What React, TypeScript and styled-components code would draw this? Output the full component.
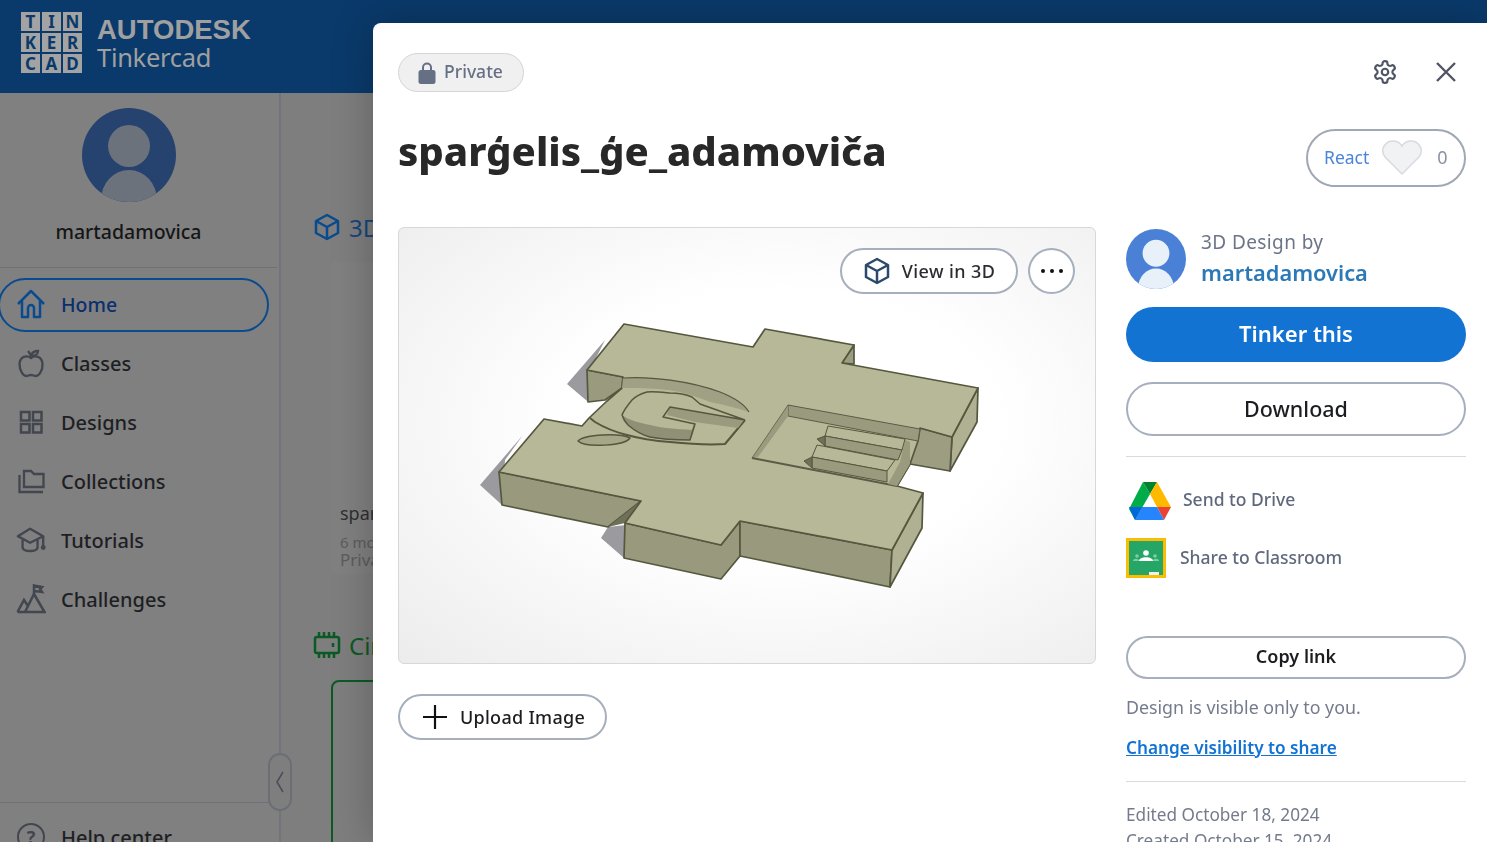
import React from "react";
import styled, { createGlobalStyle } from "styled-components";

const GlobalStyle = createGlobalStyle`
  html, body { margin: 0; padding: 0; height: 100%; overflow: hidden; }
  body { font-family: "Noto Sans", "Open Sans", sans-serif; background: #7e7e7e; }
  * { box-sizing: border-box; }
`;

const NAV_ICON_STROKE = "#42464f";

const HomeIcon = () => (
  <svg width="30" height="30" viewBox="0 0 30 30" fill="none" stroke="#0a4a8e" strokeWidth="2.500" strokeLinejoin="round">
    <path d="M2 15 L15 2 L28 15" />
    <path d="M6 12 V28 H12 V19 a3 3 0 0 1 6 0 V28 H24 V12" />
  </svg>
);

const AppleIcon = () => (
  <svg width="30" height="30" viewBox="0 0 30 30" fill="none" stroke={NAV_ICON_STROKE} strokeWidth="2.300">
    <path d="M15 10 C11 7 4 8 3.500 16 C3.500 22 7 28 10 28 C12 28 13 27 15 27 C17 27 18 28 20 28 C23 28 27 22 26.500 16 C26 8 19 7 15 10 Z" />
    <path d="M15 10 C15 7 14 5 12 3 M15 8 C16 4 19 3 22 3 C22 6 19 8 15 8 Z" />
  </svg>
);

const GridIcon = () => (
  <svg width="30" height="30" viewBox="0 0 30 30" fill="none" stroke={NAV_ICON_STROKE} strokeWidth="2.500">
    <rect x="5" y="5" width="8.500" height="8.500" />
    <rect x="17" y="5" width="8.500" height="8.500" />
    <rect x="5" y="17" width="8.500" height="8.500" />
    <rect x="17" y="17" width="8.500" height="8.500" />
  </svg>
);

const FolderIcon = () => (
  <svg width="30" height="30" viewBox="0 0 30 30" fill="none" stroke={NAV_ICON_STROKE} strokeWidth="2.300">
    <path d="M8 21 V5 H15 L18 8 H27.500 V21 Z" />
    <path d="M3.500 9 V26 H27" />
  </svg>
);

const CapIcon = () => (
  <svg width="32" height="30" viewBox="0 0 32 30" fill="none" stroke={NAV_ICON_STROKE} strokeWidth="2.500" strokeLinejoin="round">
    <path d="M2 11 L15 3 L29 11 L15 18 Z" />
    <path d="M7 15 V23 C8 28 22 28 23 23 V15" />
    <path d="M29 11 V21" />
    <circle cx="29" cy="23" r="1.400" fill={NAV_ICON_STROKE} />
  </svg>
);

const MountainIcon = () => (
  <svg width="30" height="30" viewBox="0 0 30 30" fill="none" stroke={NAV_ICON_STROKE} strokeWidth="2.500">
    <path d="M1.500 28 H28.500 L18 10 L9 28 M12 22 L8 16 L1.500 28" />
    <path d="M18 10 V1.500 L26 3 L24 5 L26 8 L18 7" />
  </svg>
);

const CubeIcon = ({ size, color, width = 2.500 }: { size: number; color: string; width?: number }) => (
  <svg width={size} height={size} viewBox="0 0 28 28" fill="none" stroke={color} strokeWidth={width} strokeLinejoin="round">
    <path d="M14 2 L25 8 V20 L14 26 L3 20 V8 Z" />
    <path d="M3 8 L14 14 L25 8 M14 14 V26" />
  </svg>
);

const ChipIcon = () => (
  <svg width="28" height="28" viewBox="0 0 28 28" fill="none" stroke="#0b5a26" strokeWidth="2.500">
    <rect x="2" y="6" width="24" height="16" rx="2" />
    <path d="M6 1 V6 M11 1 V6 M16 1 V6 M21 1 V6 M6 22 V27 M11 22 V27 M16 22 V27 M21 22 V27 M20 12 V16" />
  </svg>
);

const PersonAvatar = ({ size, bg, fg }: { size: number; bg: string; fg: string }) => (
  <svg width={size} height={size} viewBox="0 0 94 94">
    <clipPath id={`clip-${size}`}>
      <circle cx="47" cy="47" r="47" />
    </clipPath>
    <g clipPath={`url(#clip-${size})`}>
      <rect width="94" height="94" fill={bg} />
      <circle cx="47" cy="38" r="21" fill={fg} />
      <ellipse cx="47" cy="92" rx="28" ry="30" fill={fg} />
    </g>
  </svg>
);

const DriveIcon = () => (
  <svg width="44" height="40" viewBox="0 0 44 40">
    <path d="M15 1 L22 13 L7 39 L1 28 Z" fill="#00ac47" />
    <path d="M15 1 H29 L22 13 Z" fill="#00832d" />
    <path d="M29 1 L43 26 H29 L22 13 Z" fill="#ffba00" />
    <path d="M43 26 L36 39 L29 26 Z" fill="#ea4335" />
    <path d="M14 26 H29 L36 39 H7 Z" fill="#2684fc" />
    <path d="M1 26 H14 L7 39 Z" fill="#0066da" />
  </svg>
);

const ClassroomIcon = () => (
  <svg width="40" height="40" viewBox="0 0 40 40">
    <rect width="40" height="40" fill="#fbbc04" />
    <rect x="3" y="3" width="34" height="34" fill="#25a667" />
    <circle cx="20" cy="15" r="2.800" fill="#fff" />
    <path d="M13 23 C13 18 27 18 27 23 Z" fill="#fff" />
    <circle cx="11" cy="18" r="1.800" fill="#7fcfa5" />
    <circle cx="29" cy="18" r="1.800" fill="#7fcfa5" />
    <path d="M7 23 C7 20 13 20 13 23 Z M27 23 C27 20 33 20 33 23 Z" fill="#7fcfa5" />
    <rect x="23" y="34" width="10" height="3" fill="#f1f1f1" />
  </svg>
);

const ModelDrawing = () => (
  <ModelSvg viewBox="398 227 698 437">
    <g fill="#9b9b9f">
      <path d="M605 340 L567 384 L587 401 L590 370 Z" />
      <path d="M523 435 L480 485 L502 505 L505 460 Z" />
      <path d="M608 527 L601 538 L624 558 L626 525 Z" />
      <path d="M590 418 L607 401 L612 403 L598 418 Z" />
    </g>
    <g stroke="#55573f" strokeWidth="1.700" strokeLinejoin="round">
      <path d="M587 370 L623 377 L622 388 L605 400 L588 402 Z" fill="#9a9b7e" />
      <path d="M499 472 L641 501 L608 527 L502 505 Z" fill="#999a7d" />
      <path d="M641 501 L625 523 L608 527 Z" fill="#6f7058" stroke="none" />
      <path d="M625 523 L721 545 L740 521 L740 556 L721 579 L624 558 Z" fill="#999a7d" />
      <path d="M740 521 L892 550 L890 587 L740 556 Z" fill="#999a7d" />
      <path d="M923 493 L892 550 L890 587 L922 528 Z" fill="#b0b193" />
      <path d="M952 437 L978 388 L977 422 L950 471 Z" fill="#b0b193" />
      <path d="M920 428 L952 437 L950 471 L910 464 L897 486 L880 480 L905 440 Z" fill="#9d9e81" />
      <path d="M842 363 L854 345 V364 Z" fill="#9d9e81" />
      <path
        d="M624 324 L753 347 L765 329 L854 345 L842 363 L978 388 L952 437 L920 428 L918 441 L910 464 L897 486 L923 493 L892 550 L740 521 L721 545 L625 523 L641 501 L499 472 L544 419 L582 426 L589 418 L607 401 L622 388 L623 377 L587 370 Z"
        fill="#b7b897"
      />
    </g>
    <g fill="#9a9b7e" stroke="#5a5c48" strokeWidth="1">
      <path d="M788 405 L920 429 L918 441 L788 416 Z" />
      <path d="M788 405 L788 416 L758 457 L752 458 Z" stroke="none" />
      <path d="M752 458 L897 486" fill="none" strokeWidth="2" />
      <path d="M788 405 L752 458" fill="none" strokeWidth="0.800" />
      <path d="M905 440 L910 442 L910 464 L897 486 L888 484 L900 462 Z" stroke="none" />
    </g>
    <g stroke="#55573f" strokeWidth="1">
      <path d="M828 426 L905 439 L902 450 L825 436 Z" fill="#b7b897" />
      <path d="M825 436 L902 450 L898 460 L825 446 Z" fill="#9a9b7e" />
      <path d="M825 436 L817 439 L825 446 Z" fill="#6f7058" />
      <path d="M817 445 L895 460 L887 471 L812 457 Z" fill="#b7b897" />
      <path d="M812 457 L887 471 L887 482 L812 468 Z" fill="#9a9b7e" />
      <path d="M812 457 L804 461 L812 468 Z" fill="#6f7058" />
    </g>
    <g strokeLinejoin="round">
      <path d="M623 378 C650 376 690 381 720 392 C735 398 745 405 749 412 C738 408 725 405 710 402 C695 396 680 391 667 390 C650 388 635 388 622 388 Z" fill="#9fa084" />
      <path d="M623 378 C650 376 690 381 720 392 C735 398 745 405 749 412" fill="none" stroke="#55573f" strokeWidth="1.200" />
      <path
        d="M590 418 L595 422 C605 428 615 432 627 435 C645 440 655 441 670 442 C690 444 710 445 725 444 L745 420"
        fill="none"
        stroke="#55573f"
        strokeWidth="2"
      />
      <path d="M622 415 C622 420 624 422 628 425 C635 431 642 435 650 437 C665 440 678 440 690 440 L692 430 C675 429 662 428 650 425 C640 423 628 420 622 415 Z" fill="#8f9075" />
      <path d="M670 407 L744 420 L738 428 L695 422 L667 415 Z" fill="#9a9b7e" />
      <path d="M692 430 L695 422 L695 424 L690 440 Z" fill="#6f7058" />
      <path
        d="M745 420 L700 404 L692 397 C685 394 678 393 670 393 C660 392 652 391 647 392 C640 394 636 396 632 400 C627 406 624 410 622 415 C624 420 626 423 628 425 C635 431 642 435 650 437 C665 440 678 440 690 440 L695 424 L663 417 L670 407 L745 420"
        fill="none"
        stroke="#55573f"
        strokeWidth="1.500"
      />
      <path d="M578 441 C585 434 620 433 630 438 C625 446 585 448 578 441 Z" fill="#a6a788" stroke="#55573f" strokeWidth="1.500" />
    </g>
  </ModelSvg>
);

const navItems = [
  { label: "Classes", icon: <AppleIcon /> },
  { label: "Designs", icon: <GridIcon /> },
  { label: "Collections", icon: <FolderIcon /> },
  { label: "Tutorials", icon: <CapIcon /> },
  { label: "Challenges", icon: <MountainIcon /> },
];

const logoLetters = ["T", "I", "N", "K", "E", "R", "C", "A", "D"];

const App = () => (
  <>
    <GlobalStyle />
    <Page>
      <Header>
        <LogoGrid>
          {logoLetters.map((l, i) => (
            <LogoTile key={i}>{l}</LogoTile>
          ))}
        </LogoGrid>
        <Brand>
          <BrandTop>AUTODESK</BrandTop>
          <BrandBottom>Tinkercad</BrandBottom>
        </Brand>
      </Header>
      <Below>
        <Sidebar>
          <Profile>
            <PersonAvatar size={94} bg="#26426f" fg="#6b727c" />
            <ProfileName>martadamovica</ProfileName>
          </Profile>
          <Nav>
            <HomeItem>
              <HomeIcon />
              Home
            </HomeItem>
            {navItems.map((item) => (
              <NavItem key={item.label}>
                <NavIconBox>{item.icon}</NavIconBox>
                {item.label}
              </NavItem>
            ))}
          </Nav>
          <SidebarFoot>
            <HelpRow>
              <HelpCircle>?</HelpCircle>
              Help center
            </HelpRow>
            <CollapseHandle>
              <svg width="10" height="24" viewBox="0 0 10 24" fill="none" stroke="#4b4f59" strokeWidth="1.600">
                <path d="M8 2 L2 12 L8 22" />
              </svg>
            </CollapseHandle>
          </SidebarFoot>
        </Sidebar>
        <Main>
          <SectionHead>
            <CubeIcon size={28} color="#0a4a8e" />
            <SectionTitle>3D Designs</SectionTitle>
          </SectionHead>
          <DesignCard>
            <CardName>spargelis</CardName>
            <CardMeta>6 months ago</CardMeta>
            <CardPrivacy>Private</CardPrivacy>
          </DesignCard>
          <CircuitHead>
            <ChipIcon />
            <CircuitTitle>Circuits</CircuitTitle>
          </CircuitHead>
          <CircuitCard />
        </Main>
      </Below>
    </Page>

    <Modal>
      <TopBar>
        <PrivateTag>
          <svg width="18" height="23" viewBox="0 0 18 23" fill="#667085">
            <path d="M4 10 V6.500 a5 5 0 0 1 10 0 V10 H12 V6.500 a3 3 0 0 0 -6 0 V10 Z" />
            <rect x="0.500" y="9" width="17" height="14" rx="2.500" />
          </svg>
          Private
        </PrivateTag>
        <TopActions>
          <svg width="26" height="26" viewBox="0 0 24 24" fill="none" stroke="#4f5563" strokeWidth="2" strokeLinejoin="round">
            <path d="M12.220 2h-.440a2 2 0 0 0-2 2v.180a2 2 0 0 1-1 1.730l-.430.250a2 2 0 0 1-2 0l-.150-.080a2 2 0 0 0-2.730.730l-.220.380a2 2 0 0 0 .730 2.730l.150.100a2 2 0 0 1 1 1.720v.510a2 2 0 0 1-1 1.740l-.150.090a2 2 0 0 0-.730 2.730l.220.380a2 2 0 0 0 2.730.730l.150-.080a2 2 0 0 1 2 0l.430.250a2 2 0 0 1 1 1.730V20a2 2 0 0 0 2 2h.440a2 2 0 0 0 2-2v-.180a2 2 0 0 1 1-1.730l.430-.250a2 2 0 0 1 2 0l.150.080a2 2 0 0 0 2.730-.730l.220-.390a2 2 0 0 0-.730-2.730l-.150-.080a2 2 0 0 1-1-1.740v-.500a2 2 0 0 1 1-1.740l.150-.090a2 2 0 0 0 .730-2.730l-.220-.380a2 2 0 0 0-2.730-.730l-.150.080a2 2 0 0 1-2 0l-.430-.250a2 2 0 0 1-1-1.730V4a2 2 0 0 0-2-2z" />
            <circle cx="12" cy="12" r="3" />
          </svg>
          <svg width="24" height="24" viewBox="0 0 24 24" fill="none" stroke="#4f5563" strokeWidth="2.400">
            <path d="M3 3 L21 21 M21 3 L3 21" />
          </svg>
        </TopActions>
      </TopBar>

      <TitleRow>
        <Title>sparģelis_ģe_adamoviča</Title>
        <ReactPill>
          <ReactLabel>React</ReactLabel>
          <svg width="42" height="36" viewBox="0 0 42 36" fill="#f1f2f4" stroke="#d8dae0" strokeWidth="1.500">
            <path d="M21 34 L4 17 C-2 9 5 1 12 1 C16 1 19 3 21 6 C23 3 26 1 30 1 C37 1 44 9 38 17 Z" />
          </svg>
          <ReactCount>0</ReactCount>
        </ReactPill>
      </TitleRow>

      <Body>
        <div>
          <Viewer>
            <ModelDrawing />
            <ViewerActions>
              <ViewButton>
                <CubeIcon size={28} color="#2b4a6b" />
                View in 3D
              </ViewButton>
              <DotsButton>
                <Dot />
                <Dot />
                <Dot />
              </DotsButton>
            </ViewerActions>
          </Viewer>
          <UploadButton>
            <svg width="26" height="26" viewBox="0 0 26 26" stroke="#111" strokeWidth="2.200">
              <path d="M13 1 V25 M1 13 H25" />
            </svg>
            Upload Image
          </UploadButton>
        </div>

        <Side>
          <Author>
            <PersonAvatar size={60} bg="#4a80d6" fg="#e8f0fa" />
            <AuthorText>
              <AuthorCaption>3D Design by</AuthorCaption>
              <AuthorName>martadamovica</AuthorName>
            </AuthorText>
          </Author>
          <PrimaryButton>Tinker this</PrimaryButton>
          <OutlineButton>Download</OutlineButton>
          <Rule />
          <DriveRow>
            <DriveIcon />
            Send to Drive
          </DriveRow>
          <ClassroomRow>
            <ClassroomIcon />
            Share to Classroom
          </ClassroomRow>
          <CopyButton>Copy link</CopyButton>
          <VisibleNote>Design is visible only to you.</VisibleNote>
          <ChangeLink>Change visibility to share</ChangeLink>
          <BottomRule />
          <DateLine>Edited October 18, 2024</DateLine>
          <DateLine>Created October 15, 2024</DateLine>
        </Side>
      </Body>
    </Modal>
  </>
);

export default App;

const Page = styled.div`
  height: 842px;
  display: flex;
  flex-direction: column;
  overflow: hidden;
`;

const Header = styled.header`
  height: 93px;
  flex: none;
  background: #0a3a6b;
  display: flex;
  align-items: center;
  padding: 0 0 8px 21px;
  gap: 15px;
`;

const LogoGrid = styled.div`
  display: grid;
  grid-template-columns: repeat(3, 19px);
  grid-auto-rows: 19px;
  gap: 2px;
`;

const LogoTile = styled.div`
  background: #a3a3a3;
  color: #0a3a6b;
  font: 700 17px/19px "Noto Sans", sans-serif;
  text-align: center;
`;

const Brand = styled.div`
  color: #a0a0a0;
`;

const BrandTop = styled.div`
  font: 700 27.500px/29px "Liberation Sans", Arial, sans-serif;
`;

const BrandBottom = styled.div`
  font: 400 25.500px/27px "Noto Sans", sans-serif;
  letter-spacing: -0.300px;
`;

const Below = styled.div`
  flex: 1;
  display: flex;
  min-height: 0;
`;

const Sidebar = styled.aside`
  width: 281px;
  flex: none;
  background: #808080;
  border-right: 2px solid #72747a;
  display: flex;
  flex-direction: column;
  position: relative;
`;

const Profile = styled.div`
  height: 175px;
  flex: none;
  padding: 15px 20px 0 0;
  border-bottom: 1px solid #6f7176;
  display: flex;
  flex-direction: column;
  align-items: center;
  margin-right: 2px;
`;

const ProfileName = styled.div`
  margin-top: 16px;
  font-size: 19.500px;
  font-weight: 500;
  line-height: 28px;
  color: #161616;
`;

const Nav = styled.nav`
  padding-top: 10px;
  display: flex;
  flex-direction: column;
  gap: 5px;
  flex: 1;
`;

const NavItem = styled.div`
  height: 54px;
  display: flex;
  align-items: center;
  gap: 15px;
  padding: 0 0 2px 16px;
  font-size: 20px;
  font-weight: 500;
  color: #1e1f24;
`;

const NavIconBox = styled.span`
  width: 30px;
  height: 30px;
  display: flex;
  justify-content: center;
`;

const HomeItem = styled(NavItem)`
  width: 271px;
  margin-left: -2px;
  padding-left: 16px;
  border: 2px solid #0a4a8e;
  border-radius: 27px;
  font-size: 19.500px;
  color: #0b2f6e;
`;

const SidebarFoot = styled.div`
  height: 40px;
  flex: none;
  border-top: 1px solid #6f7176;
  margin-right: 2px;
`;

const HelpRow = styled.div`
  display: flex;
  align-items: center;
  gap: 16px;
  padding: 20px 0 0 17px;
  font-size: 20px;
  font-weight: 500;
  color: #1e1f24;
`;

const HelpCircle = styled.span`
  width: 28px;
  height: 28px;
  border: 2.500px solid #42464f;
  border-radius: 50%;
  display: flex;
  align-items: center;
  justify-content: center;
  font-size: 18px;
  font-weight: 700;
  color: #42464f;
`;

const CollapseHandle = styled.div`
  position: absolute;
  right: -13px;
  bottom: 31px;
  width: 24px;
  height: 58px;
  background: #7e7e7e;
  border: 2px solid #6b6e75;
  border-radius: 12px;
  display: flex;
  align-items: center;
  justify-content: center;
`;

const Main = styled.main`
  flex: 1;
  padding: 119px 0 0 32px;
  background: #7e7e7e;
`;

const SectionHead = styled.div`
  display: flex;
  align-items: center;
  gap: 8px;
  height: 30px;
`;

const SectionTitle = styled.span`
  font-size: 24px;
  color: #16457c;
  white-space: nowrap;
`;

const DesignCard = styled.div`
  margin: 20px 0 0 18px;
  width: 240px;
  height: 312px;
  background: #808080;
  border-radius: 4px;
  padding-top: 238px;
  padding-left: 9px;
`;

const CardName = styled.div`
  font-size: 18px;
  line-height: 26px;
  color: #2f3033;
`;

const CardMeta = styled.div`
  margin-top: 8px;
  font-size: 15px;
  line-height: 16px;
  color: #5c5c5c;
`;

const CardPrivacy = styled.div`
  margin-top: 0;
  font-size: 17px;
  line-height: 20px;
  color: #5c5c5c;
`;

const CircuitHead = styled(SectionHead)`
  margin-top: 56px;
`;

const CircuitTitle = styled.span`
  font-size: 24px;
  color: #0b5a26;
  white-space: nowrap;
`;

const CircuitCard = styled.div`
  margin: 20px 0 0 18px;
  width: 240px;
  height: 300px;
  border: 2px solid #0b5a26;
  border-radius: 8px;
`;

const Modal = styled.section`
  position: fixed;
  left: 373px;
  top: 23px;
  right: 0;
  bottom: 0;
  background: #fff;
  border-radius: 8px 0 0 0;
  box-shadow: 0 0 40px rgba(0, 0, 0, 0.25);
  padding: 30px 21px 0 25px;
  overflow: hidden;
`;

const TopBar = styled.div`
  display: flex;
  justify-content: space-between;
  align-items: center;
  height: 39px;
`;

const PrivateTag = styled.div`
  height: 39px;
  width: 126px;
  background: #f0f0f0;
  border: 1px solid #d3d5da;
  border-radius: 20px;
  display: flex;
  align-items: center;
  justify-content: center;
  gap: 8px;
  padding: 0 1px 3px 0;
  font-size: 17.500px;
  font-weight: 500;
  color: #667085;
  & > svg {
    margin-bottom: -3px;
  }
`;

const TopActions = styled.div`
  display: flex;
  align-items: center;
  gap: 36px;
  padding: 0 8px 2px 0;
`;

const TitleRow = styled.div`
  display: flex;
  justify-content: space-between;
  align-items: center;
  margin-top: 37px;
  height: 58px;
`;

const Title = styled.h1`
  margin: -14px 0 0;
  font-size: 40px;
  font-weight: 800;
  line-height: 52px;
  color: #282828;
`;

const ReactPill = styled.div`
  width: 160px;
  height: 58px;
  border: 2px solid #a0a7b5;
  border-radius: 29px;
  display: flex;
  align-items: center;
  padding-left: 16px;
  gap: 12px;
`;

const ReactLabel = styled.span`
  font-size: 17.500px;
  color: #4a85d8;
  padding-bottom: 2px;
`;

const ReactCount = styled.span`
  margin-left: 2px;
  font-size: 18px;
  color: #8a92a3;
  padding-bottom: 2px;
`;

const Body = styled.div`
  display: grid;
  grid-template-columns: 698px 340px;
  gap: 30px;
  margin-top: 40px;
`;

const Viewer = styled.div`
  position: relative;
  height: 437px;
  border: 1px solid #d6d8dc;
  border-radius: 6px;
  background: radial-gradient(ellipse at 55% 45%, #ffffff 40%, #ececec 100%);
`;

const ModelSvg = styled.svg`
  display: block;
  width: 698px;
  height: 437px;
  margin: -1px;
`;

const ViewerActions = styled.div`
  position: absolute;
  top: 20px;
  right: 20px;
  display: flex;
  gap: 10px;
`;

const ViewButton = styled.div`
  width: 178px;
  height: 46px;
  background: #fff;
  border: 2px solid #a6afbd;
  border-radius: 23px;
  display: flex;
  align-items: center;
  justify-content: center;
  gap: 11px;
  padding-bottom: 1px;
  font-size: 18px;
  font-weight: 500;
  letter-spacing: 0.400px;
  color: #2a2c30;
`;

const DotsButton = styled.div`
  width: 47px;
  height: 46px;
  background: #fff;
  border: 2px solid #a6afbd;
  border-radius: 50%;
  display: flex;
  align-items: center;
  justify-content: center;
  gap: 5px;
`;

const Dot = styled.span`
  width: 4px;
  height: 4px;
  border-radius: 50%;
  background: #111;
`;

const UploadButton = styled.div`
  margin-top: 30px;
  width: 209px;
  height: 46px;
  border: 2px solid #a6afbd;
  border-radius: 23px;
  display: flex;
  align-items: center;
  justify-content: center;
  gap: 12px;
  padding: 0 0 1px 2px;
  font-size: 18px;
  font-weight: 500;
  letter-spacing: 0.300px;
  color: #1c1d20;
`;

const Side = styled.aside`
  display: flex;
  flex-direction: column;
  margin-top: 2px;
`;

const Author = styled.div`
  display: flex;
  align-items: center;
  gap: 15px;
  height: 60px;
`;

const AuthorText = styled.div`
  display: flex;
  flex-direction: column;
`;

const AuthorCaption = styled.span`
  font-size: 19px;
  line-height: 28px;
  letter-spacing: 0.400px;
  color: #6c7487;
`;

const AuthorName = styled.span`
  font-size: 21.800px;
  line-height: 34px;
  font-weight: 600;
  color: #2c79b7;
`;

const PrimaryButton = styled.div`
  margin-top: 18px;
  height: 55px;
  background: #1273d3;
  border-radius: 28px;
  display: flex;
  align-items: center;
  justify-content: center;
  padding-bottom: 3px;
  font-size: 22px;
  font-weight: 600;
  color: #fff;
`;

const OutlineButton = styled.div`
  margin-top: 20px;
  height: 54px;
  border: 2px solid #a6afbd;
  border-radius: 27px;
  display: flex;
  align-items: center;
  justify-content: center;
  padding-bottom: 2px;
  font-size: 21.500px;
  font-weight: 500;
  color: #1c1d20;
`;

const Rule = styled.div`
  margin-top: 20px;
  height: 1px;
  flex: none;
  background: #d8dadf;
`;

const ShareRow = styled.div`
  display: flex;
  align-items: center;
  font-size: 17.500px;
  font-weight: 500;
  color: #5f687c;
`;

const DriveRow = styled(ShareRow)`
  margin-top: 24px;
  height: 40px;
  padding: 0 0 4px 2px;
  gap: 11px;
  & > svg {
    margin-bottom: -4px;
  }
`;

const ClassroomRow = styled(ShareRow)`
  margin-top: 17px;
  height: 40px;
  gap: 14px;
  padding-bottom: 2px;
  & > svg {
    margin-bottom: -2px;
  }
`;

const CopyButton = styled.div`
  margin-top: 58px;
  height: 43px;
  border: 2px solid #a6afbd;
  border-radius: 22px;
  display: flex;
  align-items: center;
  justify-content: center;
  padding-bottom: 3px;
  font-size: 18px;
  font-weight: 600;
  color: #1c1d20;
`;

const VisibleNote = styled.div`
  margin-top: 15px;
  font-size: 17.800px;
  line-height: 26px;
  color: #737b8c;
`;

const ChangeLink = styled.a`
  margin-top: 15px;
  font-size: 17.200px;
  line-height: 26px;
  font-weight: 600;
  color: #1273d3;
  text-decoration: underline;
`;

const BottomRule = styled(Rule)`
  margin-top: 20px;
`;

const DateLine = styled.div`
  font-size: 17.200px;
  line-height: 26px;
  color: #737b8c;
  &:nth-last-child(2) {
    margin-top: 20px;
  }
`;
